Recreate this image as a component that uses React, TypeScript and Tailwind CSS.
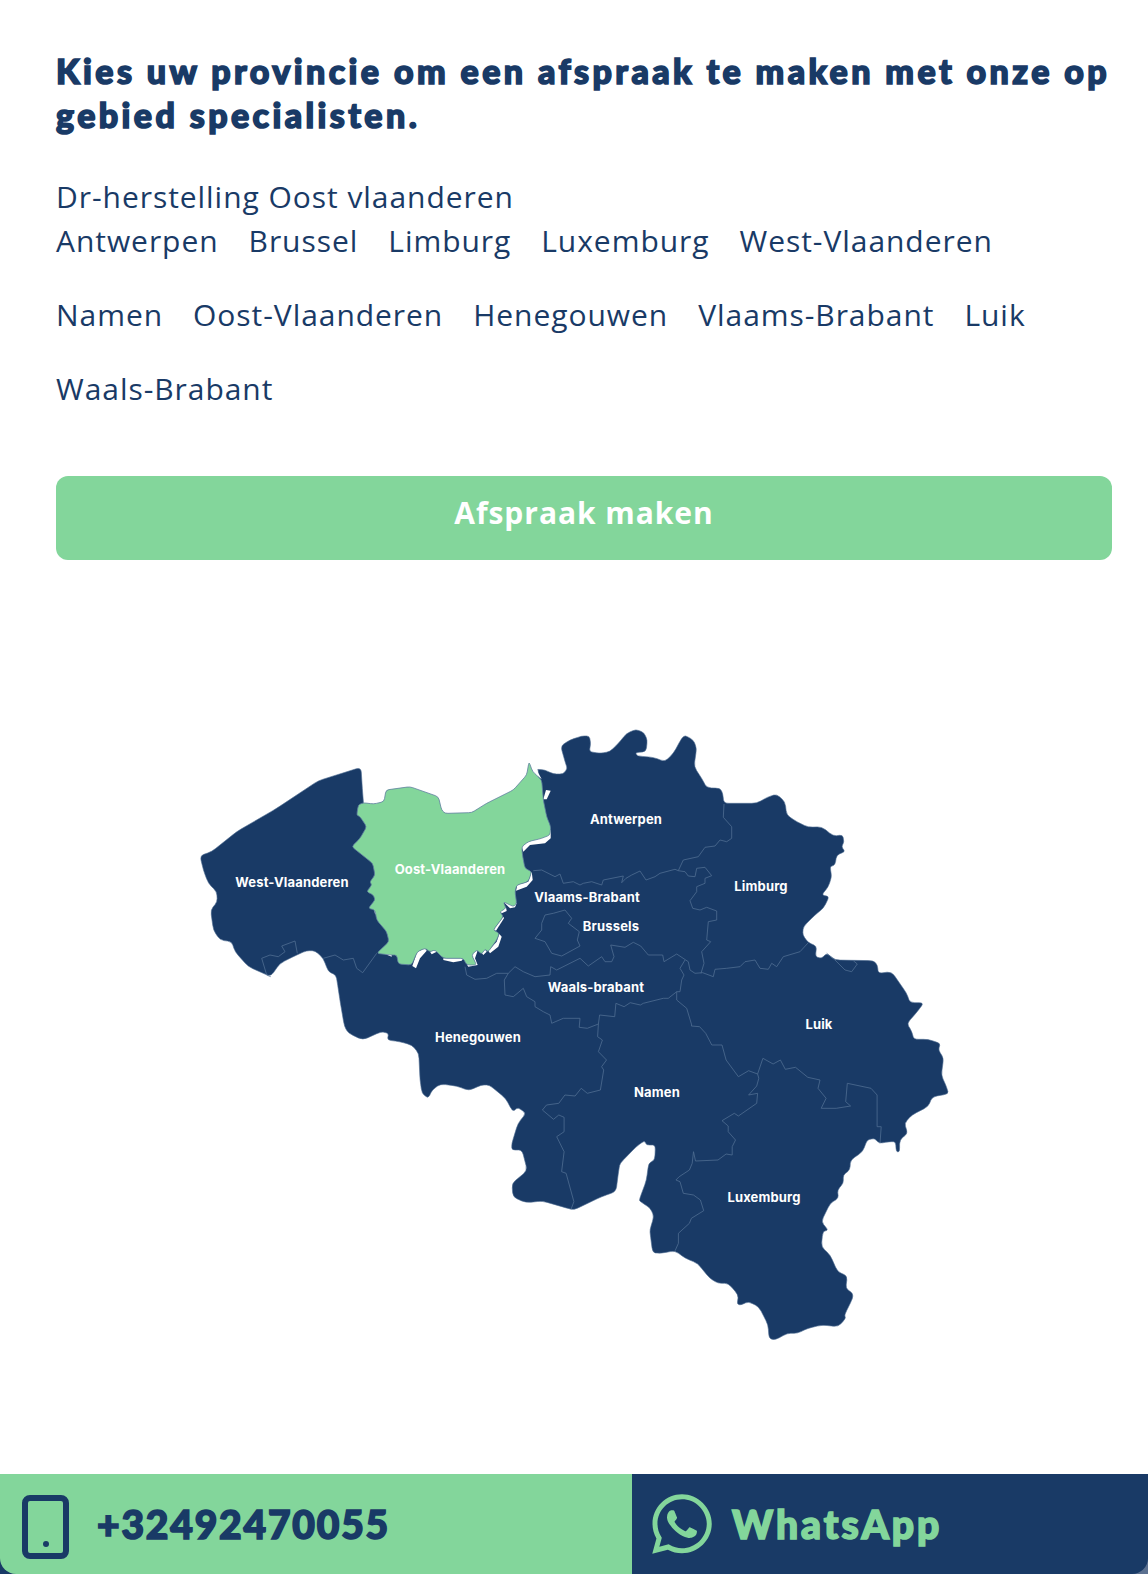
import React from "react";
import { FaWhatsapp } from "react-icons/fa";

type P = number[];
const DARK = "#193a66";
const GREEN = "#83d69b";
const TOP = 700;
const conv = (ox: number, oy: number, sx: number, sy: number) => (a: P) => {
  const o: [number, number][] = [];
  for (let i = 0; i < a.length; i += 2) o.push([ox + a[i] / sx, oy - TOP + a[i + 1] / sy]);
  return o;
};
const z1 = conv(180, 710, 3, 3);
const z2 = conv(520, 710, 3, 3);
const z3 = conv(320, 1000, 2.45, 3);
type Pt = [number, number];
const poly = (p: Pt[]) => p.map(([x, y]) => `${x.toFixed(1)},${y.toFixed(1)}`).join(" ");

// closed path whose corners are softly rounded, by at most `cap` pixels
function rounded(p: Pt[], t = 0.38, cap = 5) {
  const n = p.length;
  const f = (a: number) => a.toFixed(1);
  const toward = (c: Pt, o: Pt): Pt => {
    const len = Math.hypot(o[0] - c[0], o[1] - c[1]) || 1;
    const r = Math.min(t, cap / len);
    return [c[0] + (o[0] - c[0]) * r, c[1] + (o[1] - c[1]) * r];
  };
  let d = "";
  for (let i = 0; i < n; i++) {
    const c = p[i];
    const s = toward(c, p[(i - 1 + n) % n]);
    const e = toward(c, p[(i + 1) % n]);
    d += `${i === 0 ? "M" : "L"}${f(s[0])} ${f(s[1])} Q${f(c[0])} ${f(c[1])} ${f(e[0])} ${f(e[1])} `;
  }
  return d + "Z";
}

const outline = rounded([
  ...z2([52,178,75,180,100,192,130,192,142,175,135,155,122,108,150,90,185,78,208,78,212,100,208,125,240,130,270,125,295,100,320,70,348,58,372,68,382,90,378,125,346,128,352,138,400,142,435,155,460,130,485,85,495,76,520,90,530,115,522,170,545,205,560,233,600,235,608,250,612,280,710,280,745,260,770,253,795,275,800,315,830,335,865,352,905,350,940,378,968,375,972,395,965,410,975,425,950,435,945,465,930,470,935,500,925,530,905,555,928,560,910,595,885,615,850,650,848,675,865,698,890,708,886,740,905,745,920,730,945,750,1060,752,1072,765,1075,790,1115,785,1160,850,1170,878,1212,878]),
  ...z3([1460,40,1438,70,1450,95,1455,118,1490,118,1520,130,1515,150,1528,175,1522,225,1535,260,1540,282,1500,290,1490,320,1450,345,1432,370,1440,400,1420,420,1420,455,1412,455,1410,425,1395,425,1370,430,1358,415,1340,420,1330,455,1300,480,1298,510,1282,525,1282,550,1268,570,1270,595,1250,610,1228,665,1245,690,1232,695,1228,740,1250,765,1268,815,1292,828,1288,865,1305,880,1305,895,1285,945,1288,955,1270,980,1230,975,1195,985,1170,1000,1145,1000,1115,1020,1100,1015,1098,975,1075,920,1050,905,1030,915,1022,912,1025,885,1000,850,975,850,955,835,925,790,895,775,870,752,835,760,815,758,810,710,808,690,818,650,810,625,785,605,782,600,800,540,805,490,820,480,822,435,800,435,795,422,775,440,735,490,732,510,725,575,690,590,625,628,615,628,545,603,505,608,473,592,470,550,508,512,495,450,470,450,470,430,485,370,505,340,485,322,472,335,455,295,415,255,395,255,365,272,335,258,295,252,275,270,265,295,250,280,245,240,242,160,225,135,195,125,165,120,168,100,150,95,105,120,70,100,60,80,50,10]),
  ...z1([473,825,468,795,445,785,430,745,405,722,380,722,350,735,300,760,272,800,205,770,165,725,155,695,120,690,100,660,92,600,112,575,110,545,85,520,70,480,60,437,95,425,170,365,290,295,415,212,543,172,548,250,552,300,800,400,1070,300,1075,180]),
], 0.34, 5);

const green = rounded(z1([1047,155,1058,185,1085,210,1090,270,1100,320,1112,350,1110,375,1085,385,1045,395,1025,410,1028,440,1035,475,1055,485,1045,515,1010,525,1005,545,1010,580,1000,590,970,575,978,595,960,605,970,620,940,660,958,670,950,690,925,725,915,718,905,732,890,720,875,735,890,765,860,765,850,745,790,745,765,720,750,725,735,715,712,725,695,765,655,762,650,735,630,735,590,730,627,695,620,665,590,630,585,600,565,595,585,570,580,555,560,545,575,525,570,515,585,495,578,460,515,410,540,385,560,350,540,320,530,315,535,285,550,278,580,282,612,275,618,240,690,230,775,260,785,300,795,310,875,308,920,280,1000,240,1040,195]), 0.3, 3);

const slivers = [
  [1066,172,1085,208,1060,188],
  [1098,240,1112,242,1100,268,1090,268],
  [1112,360,1112,385,1095,400,1050,405,1030,425,1025,410,1045,392],
  [1055,485,1058,510,1040,530,1008,542,1012,525,1045,515],
  [970,575,1010,580,1005,592,990,595],
  [960,605,978,592,980,603,965,610],
  [970,620,972,625,948,662,940,660],
  [958,672,965,680,955,710,930,730,925,722,950,695],
  [915,718,920,725,910,735,905,728],
  [890,720,892,725,885,745,893,765,865,770,860,763,885,758,875,735],
  [790,745,850,745,845,752,820,757,790,750],
  [750,725,770,718,770,725,755,733],
  [735,715,740,722,720,745,708,775,697,768,712,725],
  [615,732,635,732,635,740],
  [583,600,595,600,595,615,585,612],
].map((s) => poly(z1(s)));

const lines = [
  z2([612,282,610,322,635,350,635,385,620,395,600,390,585,408,555,412,535,440,490,450,475,482,465,478,420,490,405,500,378,510,360,483,335,495,318,505,305,518,310,498,250,510,245,525,215,515,190,520,180,525,160,515,130,520,120,492,105,500,65,480,40,482]),
  z2([475,482,495,485,505,498,525,500,530,475,555,472,575,497,555,505,555,520,530,530,530,545,510,572,518,595,540,600,560,592,590,603,590,630,565,635,560,690,572,695,545,725,552,760,543,790]),
  [...z1([855,770,860,795,885,808,920,805,950,790,985,790,1005,770,1030,785,1065,800,1110,795,1112,770,1130,780,1170,760,1200,745]),
   ...z2([205,768,245,740,255,755,275,755,282,740,272,705,315,712,340,697,362,708,385,735,428,735,432,755,470,732,505,755,510,780,525,790,548,788,580,800,585,778,620,775,660,770,675,755,705,750,720,775,745,778,755,760,770,770,790,740,840,725,865,698])],
  z2([135,600,155,625,145,640,178,665,172,690,180,708,125,738,95,730,75,695,45,685,65,660,65,640,75,615,100,610,135,600]),
  [...z1([985,790,973,810,975,855,1000,860,1030,835,1040,860,1065,875,1065,890,1090,905,1110,915,1115,940,1150,925,1200,925]),
   ...z3([635,82,655,85,682,72,685,45,722,50,725,10,745,20,760,8,785,15]),
   ...z2([370,880,430,865,445,865,470,845])],
  [...z2([495,750,480,775,492,795,485,810,480,845,470,845,470,870,500,895,515,945]),
   ...z3([910,78,930,80,945,100,960,135,985,135,995,180,1025,230,1050,212,1072,222])],
  z3([682,72,680,110,692,120,682,155,702,180,690,200,695,210,687,270,655,280,640,265,625,288,600,285,585,310,555,315,545,330,572,358,585,345,598,352,598,395,580,410,598,455,592,515,603,520,622,605,615,628]),
  z3([1072,222,1075,235,1070,258,1050,285,1072,280,1070,310,1025,348,1015,340,985,362,1000,378,1000,395,1018,420,1010,440,1010,465,995,462,975,480,920,483,915,455,912,490,905,510,880,530,872,540,882,545,890,580,915,585,932,600,940,632,910,655,905,670,878,700,878,730,870,752]),
  z3([1072,222,1085,175,1110,192,1128,180,1140,208,1165,202,1195,232,1225,240,1220,265,1240,295,1228,325,1265,325,1300,318,1288,305,1292,250,1350,265,1365,285,1365,380,1375,380,1372,430]),
  z2([920,730,945,750,975,780,995,785,1012,762,1000,752]),
  z1([272,800,260,795,245,745,270,735,295,740,315,725,305,708,345,693,352,730]),
  z1([430,745,465,735,490,750,520,745,530,775,548,788,590,730]),
].map((l) => poly(l));

const labels: [string, number, number][] = [
  ["Antwerpen", 626, 824],
  ["West-Vlaanderen", 292, 887],
  ["Oost-Vlaanderen", 450, 874],
  ["Limburg", 761, 891],
  ["Vlaams-Brabant", 587, 902],
  ["Brussels", 611, 931],
  ["Waals-brabant", 596, 992],
  ["Henegouwen", 478, 1042],
  ["Luik", 819, 1029],
  ["Namen", 657, 1097],
  ["Luxemburg", 764, 1202],
];

const row1 = ["Antwerpen", "Brussel", "Limburg", "Luxemburg", "West-Vlaanderen"];
const row2 = ["Namen", "Oost-Vlaanderen", "Henegouwen", "Vlaams-Brabant", "Luik"];

function Links({ items }: { items: string[] }) {
  return (
    <div className="flex gap-[30px]">
      {items.map((t) => (
        <span key={t}>{t}</span>
      ))}
    </div>
  );
}

export default function App() {
  return (
    <div className="flex h-[1574px] w-full flex-col bg-white font-['Open_Sans',sans-serif] text-[#193a66]">
      <div className="pl-14 pr-9 pt-[49px]">
        <h1 className="font-['Lato',sans-serif] text-[34px] font-black leading-[44px] tracking-[3.4px] [-webkit-text-stroke:1.6px_#193a66]">
          Kies uw provincie om een afspraak te maken met onze op gebied specialisten.
        </h1>
        <div className="mt-[38px] text-[30px] leading-[44px] tracking-[0.95px]">
          <div>Dr-herstelling Oost vlaanderen</div>
          <Links items={row1} />
          <div className="mt-[30px]">
            <Links items={row2} />
          </div>
          <div className="mt-[30px]">Waals-Brabant</div>
        </div>
        <div className="mt-[65px] h-[84px] rounded-xl bg-[#83d69b] pt-[14px] text-center text-[30px] font-bold leading-[46px] tracking-[0.95px] text-white">
          Afspraak maken
        </div>
      </div>
      <svg className="mt-[140px] block h-[680px] w-[1148px]" viewBox="0 0 1148 680">
        <path d={outline} fill={DARK} stroke="#4f6d92" strokeWidth="0.6" />
        {slivers.map((s, i) => (
          <polygon key={i} points={s} fill="#fff" />
        ))}
        {lines.map((l, i) => (
          <polyline key={i} points={l} fill="none" stroke="#4f6d92" strokeWidth="0.8" strokeLinejoin="round" />
        ))}
        <path d={green} fill={GREEN} stroke="#5f7f9f" strokeWidth="0.8" />
        {labels.map(([t, x, y]) => (
          <text key={t} x={x} y={y - TOP} textAnchor="middle" fill="#fff" fontFamily="Inter, sans-serif" fontWeight="700" fontSize="13" letterSpacing="0.15">
            {t}
          </text>
        ))}
      </svg>
      <div className="mt-auto flex h-[100px] shrink-0">
        <div className="w-[632px] bg-[#193a66]">
          <div className="flex h-full items-center rounded-bl-[16px] bg-[#83d69b] pl-[22px]">
            <div className="relative mt-[6px] h-[64px] w-[47px] rounded-lg border-[6px] border-[#193a66]">
              <span className="absolute bottom-[6px] left-1/2 h-[6px] w-[6px] -translate-x-1/2 rounded-full bg-[#193a66]" />
            </div>
            <span className="ml-[28px] font-['Lato',sans-serif] text-[39px] font-black leading-none tracking-[1.8px] text-[#193a66] [-webkit-text-stroke:1.6px_#193a66]">+32492470055</span>
          </div>
        </div>
        <div className="flex-1 bg-[#5b7090]">
          <div className="flex h-full items-center rounded-br-[16px] bg-[#193a66] pl-[20px] text-[#83d69b]">
            <FaWhatsapp className="h-[68px] w-[60px]" />
            <span className="ml-[20px] font-['Lato',sans-serif] text-[39px] font-black leading-none tracking-[3px] [-webkit-text-stroke:1.6px_#83d69b]">WhatsApp</span>
          </div>
        </div>
      </div>
    </div>
  );
}
